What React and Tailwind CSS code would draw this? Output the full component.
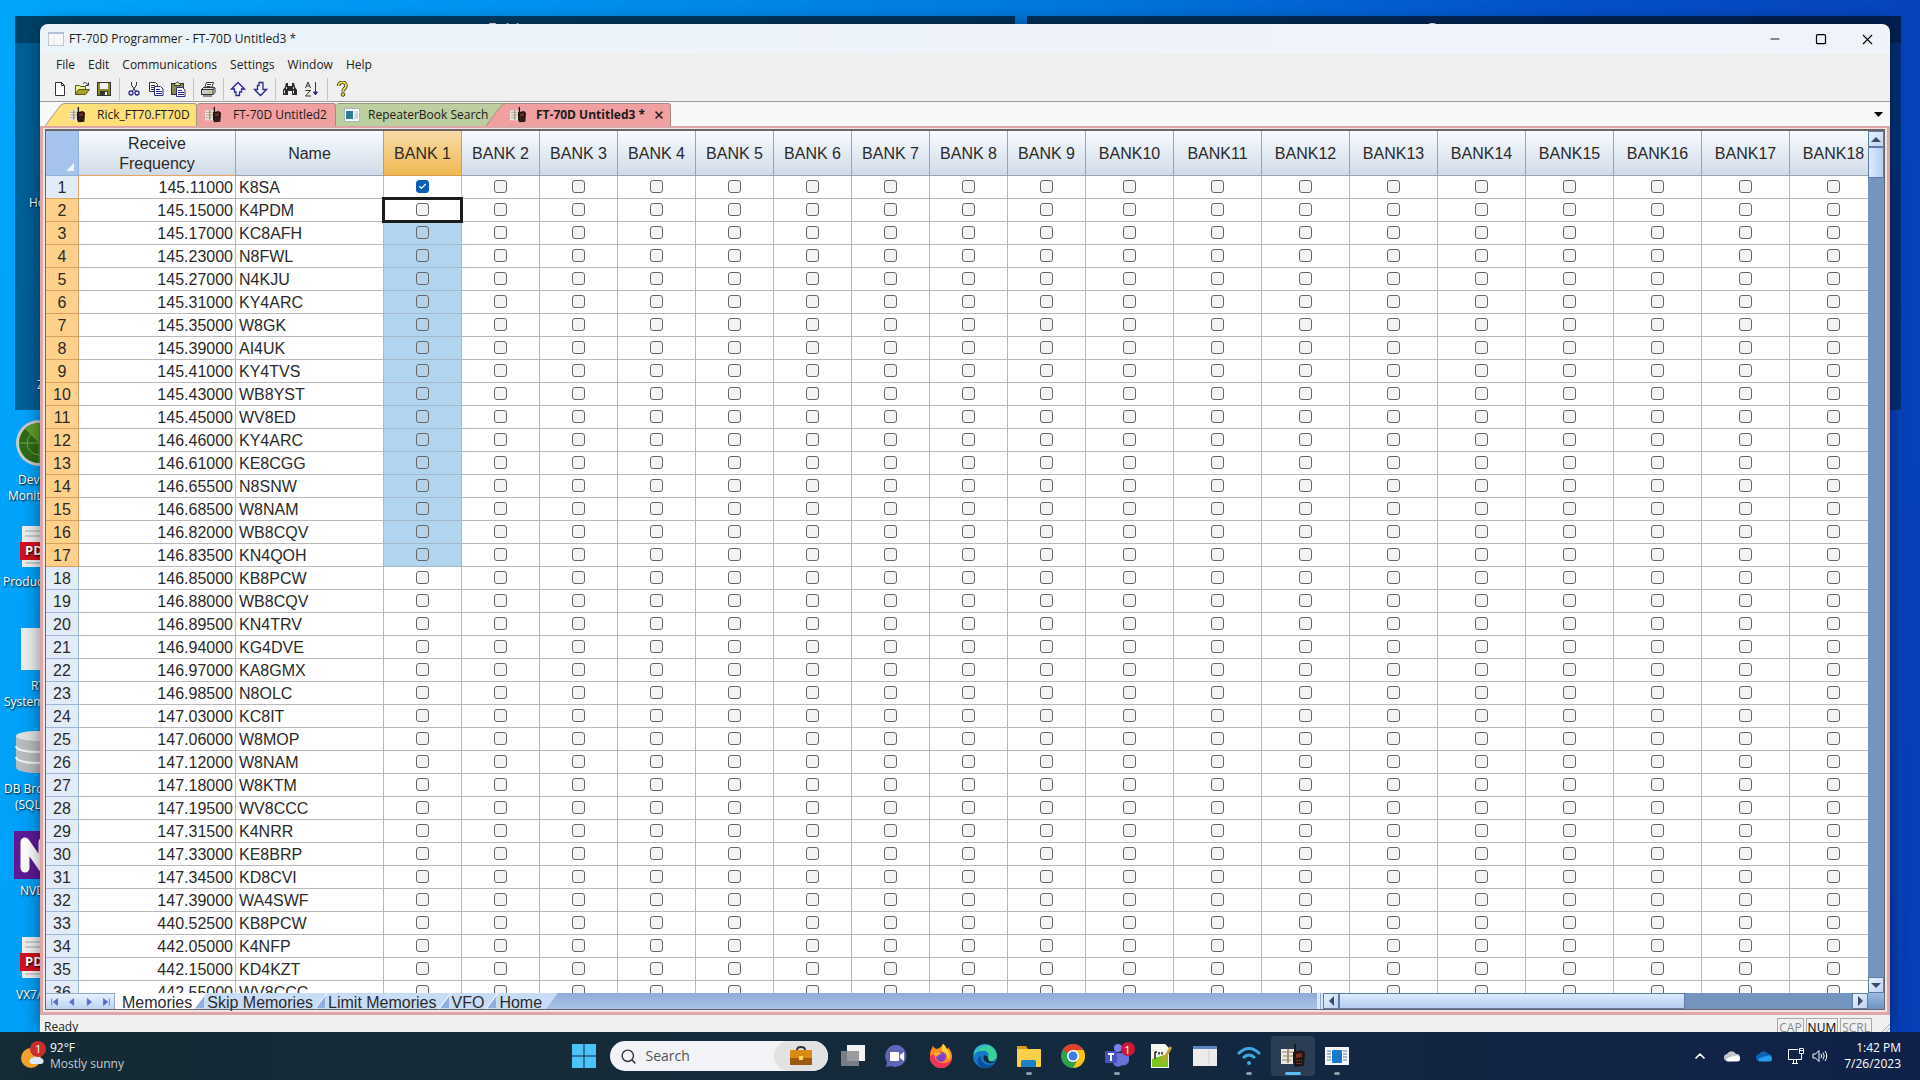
import React from "react";
import clsx from "clsx";
import { Check, ChevronUp, Minus, Search, Square, X } from "lucide-react";

const rows = [
  ["145.11000", "K8SA"],
  ["145.15000", "K4PDM"],
  ["145.17000", "KC8AFH"],
  ["145.23000", "N8FWL"],
  ["145.27000", "N4KJU"],
  ["145.31000", "KY4ARC"],
  ["145.35000", "W8GK"],
  ["145.39000", "AI4UK"],
  ["145.41000", "KY4TVS"],
  ["145.43000", "WB8YST"],
  ["145.45000", "WV8ED"],
  ["146.46000", "KY4ARC"],
  ["146.61000", "KE8CGG"],
  ["146.65500", "N8SNW"],
  ["146.68500", "W8NAM"],
  ["146.82000", "WB8CQV"],
  ["146.83500", "KN4QOH"],
  ["146.85000", "KB8PCW"],
  ["146.88000", "WB8CQV"],
  ["146.89500", "KN4TRV"],
  ["146.94000", "KG4DVE"],
  ["146.97000", "KA8GMX"],
  ["146.98500", "N8OLC"],
  ["147.03000", "KC8IT"],
  ["147.06000", "W8MOP"],
  ["147.12000", "W8NAM"],
  ["147.18000", "W8KTM"],
  ["147.19500", "WV8CCC"],
  ["147.31500", "K4NRR"],
  ["147.33000", "KE8BRP"],
  ["147.34500", "KD8CVI"],
  ["147.39000", "WA4SWF"],
  ["440.52500", "KB8PCW"],
  ["442.05000", "K4NFP"],
  ["442.15000", "KD4KZT"],
  ["442.55000", "WV8CCC"],
];

const banks = Array.from({ length: 18 }, (_, i) =>
  i < 9 ? `BANK ${i + 1}` : `BANK${i + 1}`
);

/* ---------- small drawings ---------- */

function RadioIcon({ className }) {
  return (
    <svg viewBox="0 0 24 24" className={clsx("shrink-0", className)}>
      <rect y="5" width="14" height="15" fill="#ece9e4" />
      <path d="M1 8h11M2 12h10M1 16h9" stroke="#c4b595" strokeWidth="2" />
      <path d="M7 5v14" stroke="#9c9488" strokeWidth="2" />
      <path d="M14 0v8" stroke="#1a1a1a" strokeWidth="2" />
      <path d="M12 8l9-2 3 3-1 13-9 1-2-4z" fill="#211614" />
      <path d="M15 10l6-1v4l-6 1z" fill="#7a2d20" />
      <path d="M15 16.500h6M15 19.500h6" stroke="#8a3a2a" strokeDasharray="1.500 1" />
    </svg>
  );
}

function FormIcon({ className }) {
  return (
    <svg viewBox="0 0 16 16" className={className}>
      <rect x="0.5" y="1.5" width="15" height="13" fill="#f8f8f8" stroke="#c4c8cc" />
      <rect x="0" y="1" width="16" height="2" fill="#b4bfd4" />
      <path d="M6 4v10" stroke="#e4e4e4" />
    </svg>
  );
}

function BookIcon({ className }) {
  return (
    <svg viewBox="0 0 16 16" className={clsx("shrink-0", className)}>
      <rect x="0.5" y="1.5" width="15" height="13" fill="#fff" stroke="#a8b8c0" />
      <rect x="2" y="4" width="7" height="8" fill="#2b7f92" />
      <path d="M10.500 5h3.500M10.500 7h3.500M10.500 9h3.500M10.500 11h3.500" stroke="#9ab" />
    </svg>
  );
}

const toolIcons = {
  New: <path d="M3.5 1.5h6l3 3v10h-9zM9.5 1.5v3h3" fill="#fff" stroke="#333" />,
  Open: (
    <>
      <path d="M1.5 13.5v-9h4l1 1h5v3" fill="#f4f08a" stroke="#55551a" />
      <path d="M1.5 13.5l3-5h11l-4 5z" fill="#a8a428" stroke="#55551a" />
      <path d="M9 2.5c2-1.500 4-1 5 1.500M14.500 1.500v3h-3" fill="none" stroke="#333" />
    </>
  ),
  Save: (
    <>
      <rect x="1.5" y="1.5" width="13" height="13" fill="#8a8a2c" stroke="#333" />
      <rect x="4" y="2" width="8" height="6" fill="#f2f2f2" />
      <rect x="4" y="10" width="8" height="5" fill="#333" />
      <rect x="9" y="11" width="2" height="3" fill="#fff" />
    </>
  ),
  Cut: (
    <>
      <path d="M5.500 1v3l4 6M10.500 1v3l-4 6" fill="none" stroke="#333" />
      <circle cx="5" cy="12" r="2" fill="none" stroke="#2a2a90" strokeWidth="1.300" />
      <circle cx="11" cy="12" r="2" fill="none" stroke="#2a2a90" strokeWidth="1.300" />
    </>
  ),
  Copy: (
    <>
      <path d="M1.500 1.500h6l2 2v7h-8z" fill="#fff" stroke="#333" />
      <path d="M3 4.500h4M3 6.500h4M3 8.500h3" stroke="#333" />
      <path d="M6.500 5.500h6l2.500 2.500v6.500h-8.500z" fill="#fff" stroke="#2a2a90" />
      <path d="M8 8.500h4M8 10.500h6M8 12.500h6" stroke="#2a2a90" />
    </>
  ),
  Paste: (
    <>
      <rect x="1.500" y="2.500" width="12" height="11" fill="#8c8a48" stroke="#333" />
      <path d="M4.500 4.500v-2h1.500c0-2 3-2 3 0h1.500v2z" fill="#eee8a0" stroke="#333" />
      <path d="M6.500 6.500h6l2.500 2.500v6.500h-8.500z" fill="#fff" stroke="#2a2a90" />
      <path d="M8 9.500h4M8 11.500h6M8 13.500h6" stroke="#2a2a90" />
    </>
  ),
  Print: (
    <>
      <path d="M4.500 7l2-5.500h7l-2 5.500" fill="#fff" stroke="#333" />
      <path d="M1.500 8.500l2-2h11l-1.500 2z" fill="#ddd" stroke="#333" />
      <rect x="1.500" y="8.500" width="11.500" height="5" fill="#c9c9c9" stroke="#333" />
      <path d="M13 13.500l2-2v-4.500M3 15h9M7 3.500h4M6.500 5.500h4" fill="none" stroke="#333" />
      <path d="M8 11.500h3" stroke="#c8c03a" />
    </>
  ),
  "Move up": (
    <path d="M8 1.500l6.500 6.500h-3v3h-2v3.500h-3.500v-3.500h-1.500v-3h-3z" fill="#f4f4ff" stroke="#2a2a90" strokeWidth="1.300" />
  ),
  "Move down": (
    <path d="M7 1.500h4v7h3.500l-6 6-6-6h3v-4h1.500z" fill="#f4f4ff" stroke="#2a2a90" strokeWidth="1.300" />
  ),
  Find: (
    <>
      <path d="M4 2h2v3h4v-3h2l1 4 2 3v5h-5v-4h-4v4h-5v-5l2-3z" fill="#2b2b2b" />
      <path d="M4.500 6v2M2.500 9.500v3M11.500 6v2M11.500 9.500v3" stroke="#ddd" />
    </>
  ),
  Sort: (
    <>
      <path d="M1.500 7l2.500-6 2.500 6M2.500 5h3M1.500 9.500h5l-5 5.500h5.500" fill="none" stroke="#333" />
      <path d="M11.500 1v12M9.500 11h4l-2 3z" fill="#2a2a90" stroke="#2a2a90" />
    </>
  ),
  Help: (
    <>
      <path d="M4.500 5c0-4.500 7.500-5 7.500-.5 0 3-3 3-3 6" fill="none" stroke="#333" strokeWidth="3.500" />
      <path d="M4.500 5c0-4.500 7.500-5 7.500-.5 0 3-3 3-3 6" fill="none" stroke="#efe93a" strokeWidth="1.800" />
      <circle cx="9" cy="13.500" r="1.800" fill="#efe93a" stroke="#333" />
    </>
  ),
};

const toolGroups = [
  ["New", "Open", "Save"],
  ["Cut", "Copy", "Paste"],
  ["Print"],
  ["Move up", "Move down"],
  ["Find", "Sort"],
  ["Help"],
];

/* ---------- window chrome ---------- */

function TitleBar() {
  return (
    <div className="flex h-[30px] shrink-0 items-center bg-gradient-to-r from-[#ebf4f9] to-[#f1f3fb] pl-2">
      <FormIcon className="size-4" />
      <h1 className="ml-[5px] flex-1 text-xs text-[#1b1b1b]">FT-70D Programmer - FT-70D Untitled3 *</h1>
      <button aria-label="Minimize" className="grid h-full w-[46px] place-items-center">
        <Minus size={14} strokeWidth={1.5} />
      </button>
      <button aria-label="Maximize" className="grid h-full w-[46px] place-items-center">
        <Square size={12} strokeWidth={2.5} />
      </button>
      <button aria-label="Close" className="grid h-full w-[46px] place-items-center">
        <X size={17} strokeWidth={1.5} />
      </button>
    </div>
  );
}

function MenuBar() {
  return (
    <div className="flex h-[22px] shrink-0 items-center gap-[13px] bg-[#f0efef] pl-4 text-xs text-[#222]">
      {["File", "Edit", "Communications", "Settings", "Window", "Help"].map((m) => (
        <button key={m}>{m}</button>
      ))}
    </div>
  );
}

function ToolBar() {
  return (
    <div className="flex h-[26px] shrink-0 items-center border-b border-[#9a9a9a] bg-[#f1f0f0] pl-[9px]">
      {toolGroups.map((group, i) => (
        <React.Fragment key={i}>
          {i > 0 && (
            <div className="flex w-2 justify-center">
              <div className="h-[22px] w-px bg-[#c4c4c4]" />
            </div>
          )}
          {group.map((name) => (
            <button key={name} aria-label={name} className="grid size-[22px] place-items-center">
              <svg viewBox="0 0 16 16" className="size-4">
                {toolIcons[name]}
              </svg>
            </button>
          ))}
        </React.Fragment>
      ))}
    </div>
  );
}

function DocTabs() {
  return (
    <div className="flex h-6 shrink-0 items-stretch bg-[#f8f8f8] pl-[5px] pt-px text-xs text-[#1b1b1b]">
      <svg viewBox="0 0 20 23" className="w-5">
        <path d="M0 23L15 3Q17 .5 20 .5V23z" fill="#ffe07c" />
        <path d="M0 23L15 3Q17 .5 20 .5" fill="none" stroke="#a39a7a" />
      </svg>
      <button className="flex w-[132px] items-center rounded-tr-[3px] border-r border-t border-[#a39a7a] bg-[#ffdf7a] pl-1">
        <RadioIcon className="size-4" />
        <span className="ml-3">Rick_FT70.FT70D</span>
      </button>
      <button className="flex w-[139px] items-center rounded-t-[3px] border-r border-t border-[#a88] bg-[#f1a0a2] pl-2">
        <RadioIcon className="size-4" />
        <span className="ml-3">FT-70D Untitled2</span>
      </button>
      <button className="-mr-5 flex w-[170px] items-center whitespace-nowrap rounded-tl-[3px] border-t border-[#8f9c7c] bg-[#bdcf9f] pl-2">
        <BookIcon className="size-4" />
        <span className="ml-2">RepeaterBook Search</span>
      </button>
      <svg viewBox="0 0 20 23" className="w-5">
        <path d="M0 23L15 3Q17 .5 20 .5V23z" fill="#f1a0a2" />
        <path d="M0 23L15 3Q17 .5 20 .5" fill="none" stroke="#a88" />
      </svg>
      <div className="flex w-[165px] items-center rounded-tr-[3px] border-r border-t border-[#a88] bg-[#f1a0a2] pl-1 font-bold">
        <RadioIcon className="size-4" />
        <button className="ml-[10px] flex-1 whitespace-nowrap text-left">FT-70D Untitled3 *</button>
        <button aria-label="Close tab" className="mr-[5px]">
          <X size={12} strokeWidth={3} />
        </button>
      </div>
      <div className="flex flex-1 items-center justify-end pr-[7px]">
        <button aria-label="Open documents">
          <svg viewBox="0 0 9 5" className="h-[5px] w-[9px]">
            <path d="M0 0h9L4.500 5z" fill="#000" />
          </svg>
        </button>
      </div>
    </div>
  );
}

/* ---------- memory grid ---------- */

function BankCell({ row, bank }) {
  const first = bank === 0;
  const active = first && row === 1;
  const selected = first && row >= 2 && row <= 16;
  const checked = first && row === 0;

  return (
    <td
      className={clsx(
        "relative h-[23px] border-b border-r p-0 pb-px",
        selected ? "border-[#a3b8c9] bg-[#b1d4ef]" : "border-[#b9b9b9] bg-white"
      )}
    >
      <label className="grid place-items-center">
        <input
          type="checkbox"
          defaultChecked={checked}
          aria-label={`${rows[row][1]} ${banks[bank]}`}
          className={clsx(
            "col-start-1 row-start-1 size-[13px] appearance-none rounded-[3px] border border-[#666] checked:border-[#0a5fb4] checked:bg-[#0a5fb4]",
            selected ? "bg-[#b4d2ea]" : "bg-[#f4f4f4]"
          )}
        />
        {checked && <Check size={9} strokeWidth={3} className="col-start-1 row-start-1 text-white" />}
      </label>
      {active && (
        <div className="pointer-events-none absolute -bottom-0.5 -left-0.5 -right-0.5 -top-0.5 z-10 border-[3px] border-[#1c1c1c]" />
      )}
    </td>
  );
}

function MemoryGrid() {
  const head = "border-b border-r bg-gradient-to-b p-0 pt-0.5 font-normal";
  const cool = "border-[#9aa3b3] from-[#f8fbfe] to-[#d0dbe8]";

  return (
    <table className="w-[1832px] table-fixed border-separate border-spacing-0 bg-white font-['Liberation_Sans',Arial,sans-serif] text-base leading-5 text-[#2a2a2a]">
      <colgroup>
        <col className="w-[33px]" />
        <col className="w-[157px]" />
        <col className="w-[148px]" />
        {banks.map((b, i) => (
          <col key={b} className={i < 9 ? "w-[78px]" : "w-[88px]"} />
        ))}
      </colgroup>
      <thead>
        <tr className="h-[45px]">
          <td className="border-b border-r border-[#8fb0de] bg-[#a6c3ec] p-0 align-bottom">
            <svg viewBox="0 0 8 8" className="mb-1 ml-auto mr-1 size-2">
              <path d="M8 0v8H0z" fill="#eaf3ff" />
            </svg>
          </td>
          <th className={clsx(head, cool, "border-b-[#e8a45c]")}>
            Receive
            <br />
            Frequency
          </th>
          <th className={clsx(head, cool)}>Name</th>
          {banks.map((b, i) => (
            <th key={b} className={clsx(head, i === 0 ? "border-[#d89a50] from-[#f8dba6] to-[#efb94f]" : cool)}>
              {b}
            </th>
          ))}
        </tr>
      </thead>
      <tbody>
        {rows.map(([freq, name], r) => {
          const hot = r >= 1 && r <= 16;
          return (
            <tr key={r} className="h-[23px]">
              <th
                className={clsx(
                  "border-b border-r p-0 pt-0.5 font-normal",
                  hot
                    ? "border-[#d9a060] bg-[#ffd08a]"
                    : r === 0
                      ? "border-[#e8a45c] bg-[#e2ecf8]"
                      : "border-[#9db6d8] bg-[#e2ecf8]"
                )}
              >
                {r + 1}
              </th>
              <td className="border-b border-r border-[#b9b9b9] p-0 pr-0.5 pt-0.5 text-right">{freq}</td>
              <td className="border-b border-r border-[#b9b9b9] p-0 pl-[3px] pt-0.5">{name}</td>
              {banks.map((b, i) => (
                <BankCell key={b} row={r} bank={i} />
              ))}
            </tr>
          );
        })}
      </tbody>
    </table>
  );
}

const arrows = {
  up: "M0 8L5 3l5 5z",
  down: "M0 3h10L5 8z",
  left: "M8 0v10L3 5z",
  right: "M3 0v10l5-5z",
};

function ScrollButton({ dir, label }) {
  return (
    <button
      aria-label={label}
      className="grid size-4 shrink-0 place-items-center border border-[#5f7ca8] bg-gradient-to-br from-[#e6f1ff] to-[#bdd4f4]"
    >
      <svg viewBox="0 0 10 10" className="size-2.5">
        <path d={arrows[dir]} fill="#3f4c66" />
      </svg>
    </button>
  );
}

function VerticalScroll() {
  return (
    <div className="flex w-4 shrink-0 flex-col bg-[#7496be]">
      <ScrollButton dir="up" label="Scroll up" />
      <div className="h-[31px] border border-[#5f7ca8] bg-gradient-to-r from-[#dcebff] to-[#b5cdf0]" />
      <div className="flex-1" />
      <ScrollButton dir="down" label="Scroll down" />
    </div>
  );
}

function SheetSlash({ active }) {
  return (
    <svg viewBox="0 0 15 16" className="w-[15px] shrink-0">
      <rect width="15" height="16" fill="#c9dcf6" />
      <path d="M0 0h14L2 16H0z" fill={active ? "#fff" : "#c9dcf6"} />
      <path d="M12 3v12H3z" fill="#8fb0de" />
      <path d="M14 0L2 16" stroke="#fff" />
    </svg>
  );
}

const navArrows = [
  ["First sheet", "M2 2v8M9 2v8L4 6z"],
  ["Previous sheet", "M8 2v8L3 6z"],
  ["Next sheet", "M4 2v8l5-4z"],
  ["Last sheet", "M10 2v8M3 2v8l5-4z"],
];

function SheetBar() {
  return (
    <div className="flex h-4 shrink-0 bg-gradient-to-b from-[#8fabd8] to-[#a9c2e6]">
      <div className="flex border-r border-t border-[#8fa9d0] bg-gradient-to-b from-[#e6f0ff] to-[#bcd2f4]">
        {navArrows.map(([label, d]) => (
          <button key={label} aria-label={label} className="grid w-[17px] place-items-center">
            <svg viewBox="0 0 12 12" className="size-2.5">
              <path d={d} fill="#5a6ac8" stroke="#5a6ac8" />
            </svg>
          </button>
        ))}
      </div>
      <div className="flex font-['Liberation_Sans',Arial,sans-serif] text-base leading-4 text-[#2a2a2a]">
        {["Memories", "Skip Memories", "Limit Memories", "VFO", "Home"].map((t, i) => (
          <React.Fragment key={t}>
            <button className={clsx("whitespace-nowrap pt-0.5", i === 0 ? "bg-white pl-[7px]" : "bg-[#c9dcf6]")}>
              {t}
            </button>
            {i < 4 ? (
              <SheetSlash active={i === 0} />
            ) : (
              <svg viewBox="0 0 16 16" className="w-4">
                <path d="M0 0h16L4 16H0z" fill="#c9dcf6" />
              </svg>
            )}
          </React.Fragment>
        ))}
      </div>
      <div className="flex-1" />
      <div className="flex w-[6px] justify-center bg-[#dbe8fa]">
        <div className="w-px bg-[#8fa9d0]" />
      </div>
      <div className="flex w-[545px] bg-[#7496be]">
        <ScrollButton dir="left" label="Scroll left" />
        <div className="w-[346px] border border-[#5f7ca8] bg-gradient-to-b from-[#dcebff] to-[#b5cdf0]" />
        <div className="flex-1" />
        <ScrollButton dir="right" label="Scroll right" />
      </div>
      <div className="w-4 bg-gradient-to-b from-[#9dbbe2] to-[#6f93c2]" />
    </div>
  );
}

function StatusBar() {
  return (
    <div className="relative flex h-[17px] shrink-0 overflow-hidden bg-[#f0f0f0] pl-1 pr-[18px] pt-[3px] text-xs leading-[18px] text-[#222]">
      <span className="h-[18px] flex-1">Ready</span>
      <div className="flex gap-0.5">
        {["CAP", "NUM", "SCRL"].map((k) => (
          <span
            key={k}
            className={clsx(
              "h-5 border border-[#a8a8a8] px-px",
              k === "NUM" ? "text-black" : "text-[#8a8a8a]"
            )}
          >
            {k}
          </span>
        ))}
      </div>
      <svg viewBox="0 0 8 8" className="absolute bottom-0 right-0 size-2">
        <path d="M0 8l8-8M4 8l4-4" stroke="#aaa" />
      </svg>
    </div>
  );
}

function ProgrammerWindow() {
  return (
    <div className="absolute bottom-0 left-10 right-[30px] top-6 flex flex-col overflow-hidden rounded-t-lg shadow-[0_0_18px_rgba(0,0,0,0.45)]">
      <TitleBar />
      <MenuBar />
      <ToolBar />
      <DocTabs />
      <div className="flex min-h-0 flex-1 flex-col border-x-[3px] border-b-[3px] border-t-2 border-[#dda6a9] bg-[#f2e4e4] px-0.5 pb-0.5 pt-px">
        <div className="flex min-h-0 flex-1 flex-col border border-t-2 border-[#6b6468]">
          <div className="flex min-h-0 flex-1">
            <div className="min-w-0 flex-1 overflow-hidden">
              <MemoryGrid />
            </div>
            <VerticalScroll />
          </div>
          <SheetBar />
        </div>
      </div>
      <StatusBar />
    </div>
  );
}

/* ---------- desktop ---------- */

function PdfIcon() {
  return (
    <svg viewBox="0 0 40 41" className="h-[41px] w-10">
      <path d="M2 0h36v41H2z" fill="#f0f0f0" />
      <path d="M5 5h30M5 10h30M5 37h30" stroke="#aaa" />
      <rect y="16" width="40" height="18" fill="#d3101f" />
      <text x="5" y="29" fontSize="13" fontWeight="bold" fill="#fff">PDF</text>
    </svg>
  );
}

function DesktopIcons() {
  return (
    <div className="text-xs leading-4 text-white [text-shadow:1px_1px_2px_#000]">
      <span className="absolute left-[29px] top-[195px]">Ho</span>
      <span className="absolute left-[37px] top-[377px]">Z</span>
      <svg viewBox="0 0 48 48" className="absolute left-[15px] top-[419px] size-12">
        <circle cx="24" cy="24" r="23" fill="#c9cdc6" />
        <circle cx="24" cy="24" r="20" fill="#2f6a16" />
        <circle cx="24" cy="24" r="12" fill="none" stroke="#6fae3a" />
        <path d="M24 4v40M4 24h40" stroke="#6fae3a" />
        <path d="M24 24L10 10A20 20 0 0 1 24 4z" fill="#5d9e2c" />
      </svg>
      <span className="absolute left-[18px] top-[472px]">Device</span>
      <span className="absolute left-2 top-[488px]">Monitor</span>
      <div className="absolute left-5 top-[526px]"><PdfIcon /></div>
      <span className="absolute left-[3px] top-[574px]">Products</span>
      <svg viewBox="0 0 40 42" className="absolute left-[21px] top-[628px] h-[42px] w-10">
        <rect width="40" height="42" fill="#eceff0" />
      </svg>
      <span className="absolute left-[31px] top-[678px]">RT</span>
      <span className="absolute left-1 top-[694px]">Systems</span>
      <svg viewBox="0 0 44 44" className="absolute left-[15px] top-[730px] size-11">
        <path d="M1 6v31c0 8 42 8 42 0V6z" fill="#b9bcbe" />
        <path d="M1 16c0 8 42 8 42 0M1 27c0 8 42 8 42 0" fill="none" stroke="#f2f2f2" strokeWidth="2" />
        <ellipse cx="22" cy="6" rx="21" ry="5" fill="#dfe1e2" />
      </svg>
      <span className="absolute left-1 top-[781px]">DB Browser</span>
      <span className="absolute left-[15px] top-[797px]">(SQLite)</span>
      <svg viewBox="0 0 48 48" className="absolute left-3.5 top-[831px] size-12">
        <rect width="48" height="48" fill="#5b1a96" />
        <path d="M11 37V11l18 26V11" fill="none" stroke="#fff" strokeWidth="9" strokeLinejoin="round" strokeLinecap="round" />
      </svg>
      <span className="absolute left-5 top-[883px]">NVDA</span>
      <div className="absolute left-5 top-[937px]"><PdfIcon /></div>
      <span className="absolute left-4 top-[987px]">VX7/8</span>
    </div>
  );
}

function Fence({ title, className }) {
  return (
    <div className={clsx("absolute top-4 h-[394px] bg-[#001b33]/50", className)}>
      <div className="flex h-[27px] justify-center bg-black/30 pt-[3px] text-base leading-5 text-white">{title}</div>
    </div>
  );
}

/* ---------- taskbar ---------- */

const apps = [
  {
    name: "Task view",
    art: (
      <>
        <rect x="6" y="1" width="18" height="16" fill="#f2f2f2" />
        <rect y="7" width="18" height="15" fill="#8a8d90" fillOpacity="0.85" />
      </>
    ),
  },
  {
    name: "Chat",
    art: (
      <>
        <path d="M12 1a11 11 0 1 1-6 21l-5 1 1-5A11 11 0 0 1 12 1z" fill="#6264b8" />
        <rect x="5" y="8" width="9" height="9" rx="1" fill="#fff" />
        <path d="M15 11l4-3v9l-4-3z" fill="#fff" />
      </>
    ),
  },
  {
    name: "Firefox",
    art: (
      <>
        <path d="M2 6c1-1 1-3 2-4 1 2 3 3 4 3 2-1 5-2 6-5 3 2 3 4 4 5 1 0 1-1 1-2 3 4 4 6 4 10a11 11 0 0 1-22 0c0-3 0-5 1-7z" fill="#ff8a1f" />
        <path d="M1 12a11 11 0 0 0 22 2c-2 4-6 6-11 5-4-1-7-4-7-9z" fill="#f0315a" />
        <circle cx="12" cy="13" r="5" fill="#8141c8" />
        <path d="M14 0c3 2 3 4 4 5 3 3 4 7 1 11 0-5-2-7-6-9-1-3 0-5 1-7z" fill="#ffd43a" />
        <path d="M5 9c3-2 6-1 8 1-3 0-4 1-5 3z" fill="#ffb02a" />
      </>
    ),
  },
  {
    name: "Edge",
    art: (
      <>
        <circle cx="12" cy="12" r="12" fill="#1479c9" />
        <path d="M1 9C3-2 21-3 24 11c0 4-3 6-6 6-4 0-5-2-3-4 2-4-2-7-6-6-4 0-7 1-8 5z" fill="#3dcf9a" />
        <path d="M1 9C4 1 12-1 17 2c-5-1-9 1-11 4-2 1-4 1-5 3z" fill="#2fb0e6" />
        <path d="M8 12c-1 6 5 11 12 8-3 4-9 5-13 2-4-4-3-9 1-10z" fill="#0c4f9e" />
        <path d="M11 11c-2 5 2 9 9 8 2-1 3-2 3-2-4 2-8 1-8-4z" fill="#132a3a" />
      </>
    ),
  },
  {
    name: "File Explorer",
    open: true,
    art: (
      <>
        <path d="M0 2h9l2 3h12v5H0z" fill="#d99a1c" />
        <rect y="5" width="24" height="18" rx="1" fill="#fccf4d" />
        <path d="M4 23v-5q0-2 2-2h11q2 0 2 2v5z" fill="#1d7fc4" />
      </>
    ),
  },
  {
    name: "Chrome",
    art: (
      <>
        <circle cx="12" cy="12" r="12" fill="#2fa04c" />
        <path d="M12 12L1.600 6A12 12 0 0 1 22.400 6z" fill="#e0402f" />
        <path d="M12 6h10.400A12 12 0 0 1 12 24l5-9z" fill="#fbc116" />
        <circle cx="12" cy="12" r="6" fill="#fff" />
        <circle cx="12" cy="12" r="4.500" fill="#3b7de8" />
      </>
    ),
  },
  {
    name: "Teams",
    open: true,
    badge: true,
    art: (
      <>
        <circle cx="13" cy="4" r="4" fill="#7b83eb" />
        <path d="M8 9h16v7c0 4-4 6-7 5-2 3-9 2-9-3z" fill="#6a72d8" />
        <rect y="7" width="12" height="12" rx="1" fill="#4b53bc" />
        <path d="M3 10h6M6 10v7" stroke="#fff" strokeWidth="2" />
      </>
    ),
  },
  {
    name: "Notes",
    art: (
      <>
        <path d="M2 0h14l4 4v20H2z" fill="#f6f6f0" />
        <path d="M3 15q8-3 16-5v13H3z" fill="#7fc41c" />
        <path d="M6 8v7M6 8h2M10 8v2.500M13 8v2.500" stroke="#222" strokeWidth="1.500" />
        <path d="M21 2l2 2-8 14-3 2 1-4z" fill="#c9a13a" />
      </>
    ),
  },
  {
    name: "Programmer home",
    art: (
      <>
        <rect y="2" width="24" height="20" fill="#ececec" />
        <rect y="2" width="24" height="3" fill="#5f86c4" />
        <path d="M16 6v15" stroke="#cfcfcf" />
      </>
    ),
  },
  {
    name: "Wireless",
    open: true,
    art: (
      <>
        <path d="M1 10q11-11 22 0M6 14q6-6 12 0" fill="none" stroke="#3da9e4" strokeWidth="3" />
        <circle cx="12" cy="19" r="2" fill="#3da9e4" />
      </>
    ),
  },
  { name: "FT-70D Programmer", current: true },
  {
    name: "Reader",
    open: true,
    art: (
      <>
        <rect y="3" width="24" height="18" fill="#f4f6f8" />
        <path d="M2 7h4M2 10h4M2 13h4M2 16h4M18 7h4M18 10h4M18 13h4M18 16h4" stroke="#5b7f9c" />
        <rect x="7" y="6" width="10" height="13" rx="1" fill="#1878d0" />
      </>
    ),
  },
];

function TaskApp({ app }) {
  return (
    <button
      aria-label={app.name}
      className={clsx("relative grid h-10 w-11 place-items-center rounded", app.current && "bg-white/10")}
    >
      {app.art ? (
        <svg viewBox="0 0 24 24" className="size-6">{app.art}</svg>
      ) : (
        <RadioIcon className="size-6" />
      )}
      {app.open && <span className="absolute bottom-px h-[3px] w-[6px] rounded-full bg-[#8d98a3]" />}
      {app.current && <span className="absolute bottom-px h-[3px] w-4 rounded-full bg-[#5cbcec]" />}
      {app.badge && (
        <span className="absolute right-1 top-[6px] grid size-[14px] place-items-center rounded-full bg-[#cc1a36] text-[11px] leading-none text-white">
          1
        </span>
      )}
    </button>
  );
}

function Cloud({ light, dark }) {
  return (
    <svg viewBox="0 0 16 12" className="h-3 w-4">
      <path d="M4 11a3.500 3.500 0 0 1-1-7 5 5 0 0 1 9 0 3.500 3.500 0 0 1 1 7z" fill={dark} />
      <path d="M3 11.500q-2-3 2-4l3-1 5-1q3 1 3 3.500 0 2.500-3 2.500z" fill={light} />
    </svg>
  );
}

function Taskbar() {
  return (
    <div className="grid h-12 shrink-0 grid-cols-[1fr_auto_1fr] items-center bg-gradient-to-r from-[#142b35] via-[#142a3c] to-[#102149] text-xs leading-4 text-white">
      <button className="flex w-max items-center pl-5 text-left">
        <svg viewBox="0 0 26 30" className="h-[30px] w-[26px]">
          <circle cx="11" cy="17" r="10" fill="#f3a12c" />
          <path d="M12 23a3 3 0 0 1 1-6 4 4 0 0 1 7 0 3 3 0 0 1 1 6z" fill="#dbe9fa" />
          <circle cx="18" cy="8" r="8" fill="#c5302c" />
          <text x="15" y="12" fontSize="11" fill="#fff">1</text>
        </svg>
        <span className="ml-1">
          92°F
          <br />
          <span className="text-[#c3cacf]">Mostly sunny</span>
        </span>
      </button>

      <div className="flex items-center">
        <button aria-label="Start" className="grid h-10 w-11 place-items-center">
          <svg viewBox="0 0 24 24" className="size-6">
            <path d="M0 0h11.500v11.500H0zM12.500 0H24v11.500H12.500zM0 12.500h11.500V24H0zM12.500 12.500H24V24H12.500z" fill="#4cc2f8" />
          </svg>
        </button>
        <label className="ml-1 mr-[3px] flex h-[30px] w-[218px] items-center rounded-full bg-[#f2f3f6] pl-2.5 text-[#333]">
          <Search size={17} strokeWidth={2} />
          <input
            aria-label="Search"
            placeholder="Search"
            className="ml-[9px] w-0 flex-1 bg-transparent text-sm placeholder:text-[#555]"
          />
          <span className="grid h-full w-[54px] place-items-center rounded-full bg-[#e3e2e2]">
            <svg viewBox="0 0 24 20" className="h-5 w-6">
              <path d="M8 4q0-3 4-3t4 3" fill="none" stroke="#333" strokeWidth="2" />
              <rect x="1" y="4" width="22" height="15" rx="1" fill="#d98a16" />
              <rect x="1" y="12" width="22" height="7" fill="#9c5a10" />
              <rect x="10" y="10" width="4" height="4" fill="#ffd560" />
            </svg>
          </span>
        </label>
        {apps.map((a) => (
          <TaskApp key={a.name} app={a} />
        ))}
      </div>

      <div className="flex items-center justify-end pr-[19px]">
        <button aria-label="Show hidden icons" className="mr-4">
          <ChevronUp size={16} strokeWidth={2.5} />
        </button>
        <button aria-label="OneDrive personal" className="mr-4">
          <Cloud light="#fff" dark="#c3c6cc" />
        </button>
        <button aria-label="OneDrive work" className="mr-4">
          <Cloud light="#2a9be8" dark="#0f62b4" />
        </button>
        <button aria-label="Network and volume" className="flex gap-2">
          <svg viewBox="0 0 16 16" className="size-4" fill="none" stroke="#fff">
            <path d="M10 1.500H.5v10h13V9M4 15.500h6M5.500 12v3M8.500 12v3" />
            <path d="M11.500.5h4v5h-4zM13.500 6v3M11.500 2.500h4" />
          </svg>
          <svg viewBox="0 0 16 16" className="size-4" fill="none" stroke="#fff">
            <path d="M1 6v4h2.500L7 13.500v-11L3.500 6z" />
            <path d="M9 6q1.500 2 0 4M11 4.500q2.500 3.500 0 7M13 3q3.500 5 0 10" />
          </svg>
        </button>
        <button className="ml-4 text-right">
          1:42 PM
          <br />
          7/26/2023
        </button>
      </div>
    </div>
  );
}

export default function App() {
  return (
    <div className="flex h-screen flex-col overflow-hidden font-['Open_Sans','Noto_Sans',sans-serif]">
      <main className="relative min-h-0 flex-1 overflow-hidden bg-[linear-gradient(98deg,#00a6fc_0%,#0092f0_25%,#0077dc_52%,#0450c8_76%,#063eb6_100%)]">
        <Fence title="Folders" className="left-[15px] w-[52.1%]" />
        <Fence title="Programs" className="left-[53.5%] right-[19px]" />
        <DesktopIcons />
        <ProgrammerWindow />
      </main>
      <Taskbar />
    </div>
  );
}
